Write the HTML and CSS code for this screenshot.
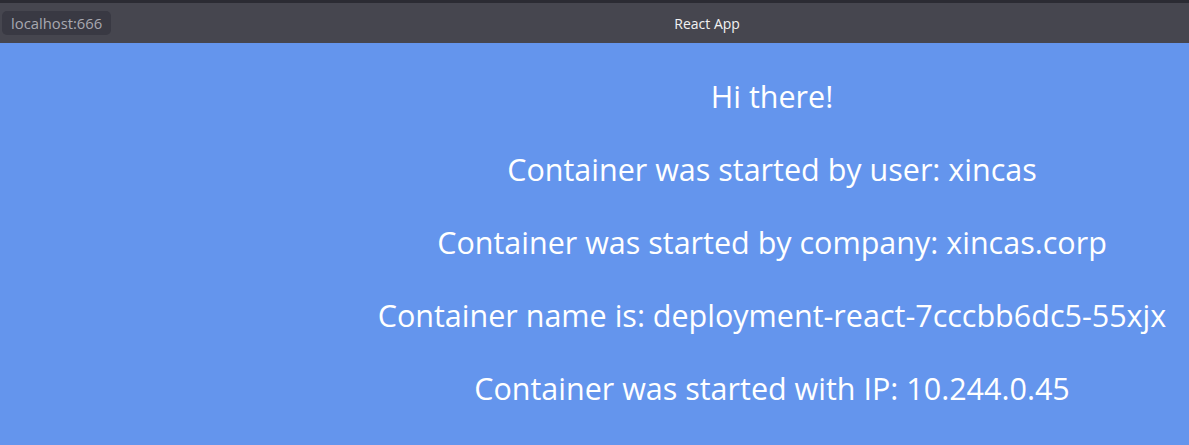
FILE: index.html
```html
<!DOCTYPE html>
<html>
<head>
<meta charset="utf-8">
<title>React App</title>
<link rel="stylesheet" href="styles.css">
</head>
<body>
<div class="topline"></div>
<div class="titlebar">
  <div class="url">localhost:666</div>
  <div class="title">React App</div>
</div>
<main class="app">
  <p class="line">Hi there!</p>
  <p class="line">Container was started by user: xincas</p>
  <p class="line">Container was started by company: xincas.corp</p>
  <p class="line">Container name is: deployment-react-7cccbb6dc5-55xjx</p>
  <p class="line">Container was started with IP: 10.244.0.45</p>
</main>
</body>
</html>
```
FILE: styles.css
```css
html, body {
  margin: 0;
  padding: 0;
  height: 100%;
  background: #6495ed;
  overflow: hidden;
}
.topline {
  height: 3px;
  background: #2b2b33;
}
.titlebar {
  height: 40px;
  background: #46464f;
  display: flex;
  align-items: center;
  font-family: "Open Sans", sans-serif;
}
.url {
  margin-left: 2px;
  height: 24px;
  padding: 0 9px 0 9px;
  border-radius: 5px;
  background: #393943;
  color: #a8a8b0;
  font-size: 14.8px;
  line-height: 24px;
}
.title {
  flex: 1;
  text-align: center;
  margin-left: 114px;
  color: #f2f2f2;
  font-size: 14px;
}
.app {
  padding: 17px 0 0 355px;
  text-align: center;
  color: #ffffff;
  font-family: "Open Sans", sans-serif;
  font-size: 30.5px;
}
.line {
  margin: 0;
  line-height: 73px;
  white-space: nowrap;
}
```
